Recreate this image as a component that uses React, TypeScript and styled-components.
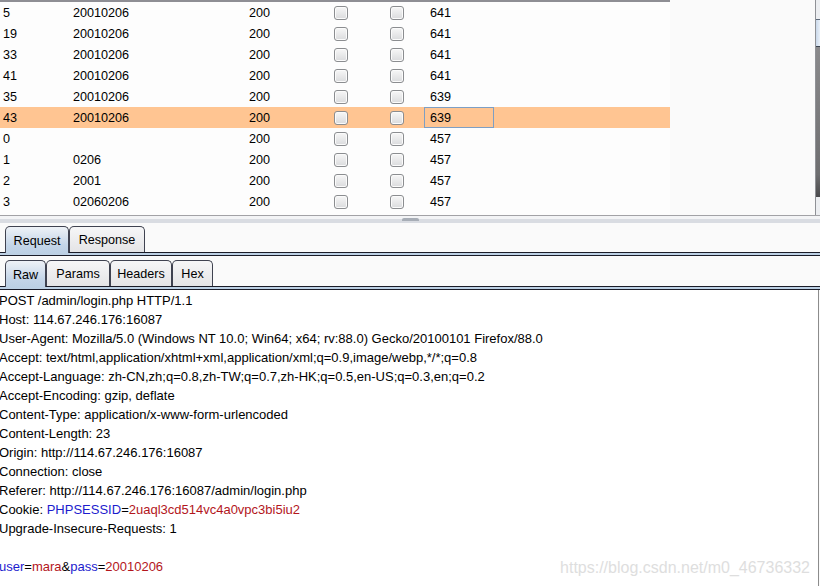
import React from "react"
import styled, { createGlobalStyle } from "styled-components"

type Row = { id: string; payload: string; status: string; length: string; selected?: boolean }

const rows: Row[] = [
  { id: "5", payload: "20010206", status: "200", length: "641" },
  { id: "19", payload: "20010206", status: "200", length: "641" },
  { id: "33", payload: "20010206", status: "200", length: "641" },
  { id: "41", payload: "20010206", status: "200", length: "641" },
  { id: "35", payload: "20010206", status: "200", length: "639" },
  { id: "43", payload: "20010206", status: "200", length: "639", selected: true },
  { id: "0", payload: "", status: "200", length: "457" },
  { id: "1", payload: "0206", status: "200", length: "457" },
  { id: "2", payload: "2001", status: "200", length: "457" },
  { id: "3", payload: "02060206", status: "200", length: "457" },
]

const headerLines = [
  "POST /admin/login.php HTTP/1.1",
  "Host: 114.67.246.176:16087",
  "User-Agent: Mozilla/5.0 (Windows NT 10.0; Win64; x64; rv:88.0) Gecko/20100101 Firefox/88.0",
  "Accept: text/html,application/xhtml+xml,application/xml;q=0.9,image/webp,*/*;q=0.8",
  "Accept-Language: zh-CN,zh;q=0.8,zh-TW;q=0.7,zh-HK;q=0.5,en-US;q=0.3,en;q=0.2",
  "Accept-Encoding: gzip, deflate",
  "Content-Type: application/x-www-form-urlencoded",
  "Content-Length: 23",
  "Origin: http://114.67.246.176:16087",
  "Connection: close",
  "Referer: http://114.67.246.176:16087/admin/login.php",
]

const GlobalStyle = createGlobalStyle`
  html, body {
    margin: 0;
    padding: 0;
    background: #fafafa;
    overflow: hidden;
  }
  body {
    font-family: "Liberation Sans", Arial, sans-serif;
    font-size: 12.6px;
    color: #000;
  }
`

const Tab = ({ label, width, active }: { label: string; width: number; active?: boolean }) => (
  <S.Tab $width={width} $active={active}>{label}</S.Tab>
)

const App: React.FC = () => {
  return (
    <S.Page>
      <GlobalStyle />
      <S.ResultsPane>
        <S.Table>
          {rows.map((row) => (
            <S.Row key={row.id} $selected={row.selected}>
              <S.Cell $first>{row.id}</S.Cell>
              <S.Cell>{row.payload}</S.Cell>
              <S.Cell>{row.status}</S.Cell>
              <S.CheckCell><S.Checkbox /></S.CheckCell>
              <S.CheckCell><S.Checkbox /></S.CheckCell>
              <S.Cell $focused={row.selected}>{row.length}</S.Cell>
              <S.Cell />
            </S.Row>
          ))}
        </S.Table>
        <S.Viewport />
        <S.ScrollBar>
          <S.ScrollCap />
          <S.ScrollThumb />
          <S.ScrollTrack />
          <S.ScrollCap $bottom />
        </S.ScrollBar>
      </S.ResultsPane>

      <S.Splitter>
        <S.Grip />
      </S.Splitter>

      <S.TabRow>
        <Tab label="Request" width={64} active />
        <Tab label="Response" width={76} />
      </S.TabRow>
      <S.PanelRule />

      <S.TabRow $inner>
        <Tab label="Raw" width={41} active />
        <Tab label="Params" width={64} />
        <Tab label="Headers" width={62} />
        <Tab label="Hex" width={41} />
      </S.TabRow>
      <S.PanelRule />

      <S.Editor>
        {headerLines.map((line) => (
          <S.Line key={line}>{line}</S.Line>
        ))}
        <S.Line>
          Cookie: <S.Name>PHPSESSID</S.Name>=<S.Value>2uaql3cd514vc4a0vpc3bi5iu2</S.Value>
        </S.Line>
        <S.Line>Upgrade-Insecure-Requests: 1</S.Line>
        <S.Line />
        <S.Line>
          <S.Name>user</S.Name>=<S.Value>mara</S.Value>&amp;<S.Name>pass</S.Name>=<S.Value>20010206</S.Value>
        </S.Line>
      </S.Editor>

      <S.Watermark>https://blog.csdn.net/m0_46736332</S.Watermark>
    </S.Page>
  )
}

const S = {
  Page: styled.div`
    position: relative;
    display: flex;
    flex-direction: column;
    width: 820px;
    height: 586px;
    overflow: hidden;
    background: #fafafa;
  `,
  ResultsPane: styled.div`
    display: flex;
    height: 215px;
    flex-shrink: 0;
    border-bottom: 1px solid #a2a2a6;
  `,
  Table: styled.div`
    width: 670px;
    background: #fdfdfd;
    border-top: 2px solid #8e8e94;
  `,
  Row: styled.div<{ $selected?: boolean }>`
    display: grid;
    grid-template-columns: 67px 176px 69px 56px 56px 70px 176px;
    height: 21px;
    background: ${({ $selected }) => ($selected ? "#ffc592" : "transparent")};
  `,
  Cell: styled.div<{ $first?: boolean; $focused?: boolean }>`
    display: flex;
    align-items: center;
    padding-top: 1px;
    padding-left: ${({ $first }) => ($first ? "3px" : "6px")};
    box-shadow: ${({ $focused }) => ($focused ? "inset 0 0 0 1px #7e9fc4" : "none")};
  `,
  CheckCell: styled.div`
    display: flex;
    align-items: center;
    justify-content: center;
    padding-left: 1px;
  `,
  Checkbox: styled.span`
    width: 12px;
    height: 12px;
    border: 1px solid #8b8d90;
    border-radius: 3px;
    background: linear-gradient(#f7f7f7, #dadbdd);
    box-shadow: inset 0 0 0 1px #fbfbfb;
  `,
  Viewport: styled.div`
    flex: 1;
    background: #fafafa;
  `,
  ScrollBar: styled.div`
    display: flex;
    flex-direction: column;
    width: 4px;
    border-left: 1px solid #8f9196;
  `,
  ScrollCap: styled.div<{ $bottom?: boolean }>`
    height: ${({ $bottom }) => ($bottom ? "18px" : "19px")};
    background: #eceef1;
  `,
  ScrollThumb: styled.div`
    height: 26px;
    border-top: 1px solid #5d6a7a;
    border-bottom: 1px solid #3c4450;
    background: linear-gradient(90deg, #c9d8ea, #e9f0f8);
  `,
  ScrollTrack: styled.div`
    flex: 1;
    background: linear-gradient(#8a8a8c, #6e6e70 85%, #4a4a4c);
  `,
  Splitter: styled.div`
    display: flex;
    justify-content: center;
    align-items: flex-end;
    height: 7px;
    flex-shrink: 0;
    background: linear-gradient(#f3f4f6 0, #f3f4f6 3px, #d9dce2 3px, #d9dce2 7px);
  `,
  Grip: styled.div`
    width: 17px;
    height: 3px;
    margin-bottom: 2px;
    border-radius: 2px 2px 0 0;
    background: #a7adb6;
  `,
  TabRow: styled.div<{ $inner?: boolean }>`
    display: flex;
    align-items: flex-end;
    height: 26px;
    flex-shrink: 0;
    padding: ${({ $inner }) => ($inner ? "4px" : "3px")} 0 0 5px;
  `,
  Tab: styled.div<{ $width: number; $active?: boolean }>`
    position: relative;
    z-index: ${({ $active }) => ($active ? 1 : 0)};
    box-sizing: border-box;
    display: flex;
    align-items: center;
    justify-content: center;
    width: ${({ $width }) => $width}px;
    height: ${({ $active }) => ($active ? "27px" : "26px")};
    margin-bottom: ${({ $active }) => ($active ? "-1px" : "0")};
    padding-top: 1px;
    border: 1px solid #3f4250;
    border-bottom: none;
    border-radius: 5px 5px 0 0;
    background: ${({ $active }) =>
      $active
        ? "linear-gradient(#eef2f7, #c4d5e8 70%, #bcd0e4)"
        : "linear-gradient(#f6f6f7, #e4e4e6)"};
  `,
  PanelRule: styled.div`
    height: 2px;
    flex-shrink: 0;
    border-top: 1px solid #1a1c28;
    border-bottom: 1px solid #1a1c28;
    background: #bcd0e4;
  `,
  Editor: styled.div`
    flex: 1;
    padding-top: 1px;
    background: #ffffff;
    border-right: 1px solid #8c8c8c;
    margin-right: 1px;
    font-size: 13px;
  `,
  Line: styled.div`
    height: 19px;
    line-height: 19px;
    margin-left: -1px;
    white-space: pre;
  `,
  Name: styled.span`
    color: #1c1cce;
  `,
  Value: styled.span`
    color: #b3161c;
  `,
  Watermark: styled.div`
    position: absolute;
    right: 10px;
    bottom: 9px;
    font-size: 16px;
    color: #dedede;
  `,
}

export default App
